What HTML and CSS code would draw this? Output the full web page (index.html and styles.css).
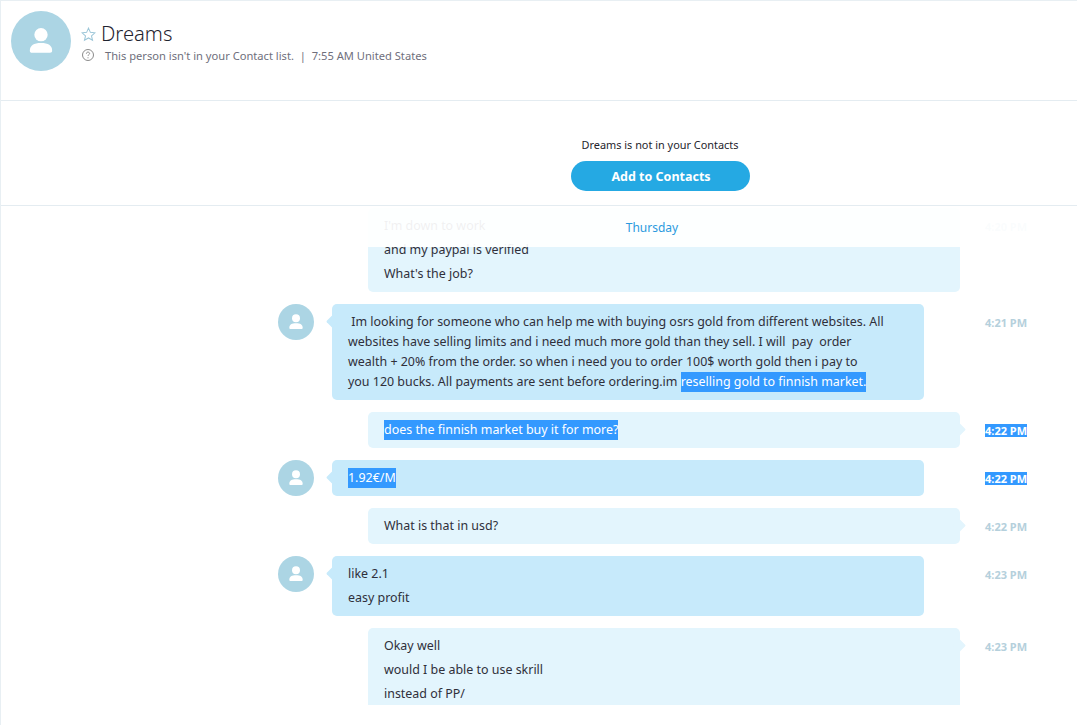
FILE: index.html
```html
<!DOCTYPE html>
<html lang="en">
<head>
<meta charset="utf-8">
<title>Dreams</title>
<link rel="stylesheet" href="styles.css">
</head>
<body>
<div class="app">
  <header class="header">
    <div class="avatar avatar-lg">
      <svg viewBox="0 0 36 36" class="person"><circle cx="18" cy="14.200" r="4"/><path d="M11.300 23.800c0-3.200 2.400-4.600 6.700-4.600s6.700 1.400 6.700 4.600c0 .8-.5 1.200-1.300 1.200H12.600c-.8 0-1.300-.4-1.300-1.200z"/></svg>
    </div>
    <div class="header-info">
      <div class="title-row">
        <svg class="star" viewBox="0 0 16 16"><path d="M8 1.200l2 4.500 4.900.5-3.700 3.200 1.100 4.800L8 11.700l-4.300 2.500 1.100-4.800L1.100 6.200 6 5.700z"/></svg>
        <h1 class="name">Dreams</h1>
      </div>
      <div class="status-row">
        <svg class="help" viewBox="0 0 14 14"><circle cx="7" cy="7" r="5.500"/><path d="M5.400 5.700c0-1 .7-1.600 1.600-1.600s1.600.6 1.600 1.400c0 1.200-1.600 1.200-1.600 2.400"/><path d="M7 9.300v1"/></svg>
        <span class="status-text">This person isn't in your Contact list.&nbsp; |&nbsp; 7:55 AM United States</span>
      </div>
    </div>
  </header>
  <section class="banner">
    <p class="banner-text">Dreams is not in your Contacts</p>
    <button class="add-btn">Add to Contacts</button>
  </section>
  <main class="chat">
    <div class="day-bar">Thursday</div>
    <div class="messages">
      <div class="row">
        <div class="bubble out">
          <p>I'm down to work</p>
          <p>and my paypal is verified</p>
          <p>What's the job?</p>
        </div>
        <time class="stamp">4:20 PM</time>
      </div>
      <div class="row">
        <div class="avatar avatar-sm"><svg viewBox="0 0 36 36" class="person"><circle cx="18" cy="14.200" r="4"/><path d="M11.300 23.800c0-3.200 2.400-4.600 6.700-4.600s6.700 1.400 6.700 4.600c0 .8-.5 1.200-1.300 1.200H12.600c-.8 0-1.300-.4-1.300-1.200z"/></svg></div>
        <div class="bubble in tail">
          <p>&nbsp;Im looking for someone who can help me with buying osrs gold from different websites. All<br>websites have selling limits and i need much more gold than they sell. I will &nbsp;pay &nbsp;order<br>wealth + 20% from the order. so when i need you to order 100$ worth gold then i pay to<br>you 120 bucks. All payments are sent before ordering.im <span class="sel">reselling gold to finnish market.</span></p>
        </div>
        <time class="stamp">4:21 PM</time>
      </div>
      <div class="row">
        <div class="bubble out tail">
          <p><span class="sel">does the finnish market buy it for more?</span></p>
        </div>
        <time class="stamp"><span class="sel">4:22 PM</span></time>
      </div>
      <div class="row">
        <div class="avatar avatar-sm"><svg viewBox="0 0 36 36" class="person"><circle cx="18" cy="14.200" r="4"/><path d="M11.300 23.800c0-3.200 2.400-4.600 6.700-4.600s6.700 1.400 6.700 4.600c0 .8-.5 1.200-1.300 1.200H12.600c-.8 0-1.300-.4-1.300-1.200z"/></svg></div>
        <div class="bubble in tail">
          <p><span class="sel">1.92€/M</span></p>
        </div>
        <time class="stamp"><span class="sel">4:22 PM</span></time>
      </div>
      <div class="row">
        <div class="bubble out tail">
          <p>What is that in usd?</p>
        </div>
        <time class="stamp">4:22 PM</time>
      </div>
      <div class="row">
        <div class="avatar avatar-sm"><svg viewBox="0 0 36 36" class="person"><circle cx="18" cy="14.200" r="4"/><path d="M11.300 23.800c0-3.200 2.400-4.600 6.700-4.600s6.700 1.400 6.700 4.600c0 .8-.5 1.200-1.300 1.200H12.600c-.8 0-1.300-.4-1.300-1.200z"/></svg></div>
        <div class="bubble in tail">
          <p>like 2.1</p>
          <p>easy profit</p>
        </div>
        <time class="stamp">4:23 PM</time>
      </div>
      <div class="row">
        <div class="bubble out tail">
          <p>Okay well</p>
          <p>would I be able to use skrill</p>
          <p>instead of PP/</p>
          <p>&nbsp;</p>
        </div>
        <time class="stamp">4:23 PM</time>
      </div>
    </div>
  </main>
</div>
</body>
</html>
```
FILE: styles.css
```css
* { box-sizing: border-box; }
html, body { margin: 0; padding: 0; background: #fff; }
body { font-family: "Noto Sans", "Open Sans", sans-serif; color: #2f2f3a; overflow: hidden; }
p, h1 { margin: 0; font-weight: normal; }
.app { width: 1077px; height: 725px; border-top: 1px solid #e8eff3; border-left: 1px solid #e8eff3; overflow: hidden; }

.header { height: 100px; border-bottom: 1px solid #e4ecf1; display: flex; align-items: flex-start; padding: 10px 0 0 10px; }
.avatar { border-radius: 50%; background: #acd5e4; flex: none; }
.avatar-lg { width: 60px; height: 60px; }
.avatar-sm { width: 36px; height: 36px; margin-right: 18px; }
.person { display: block; width: 100%; height: 100%; fill: #fff; }
.header-info { margin-left: 10px; }
.title-row { display: flex; align-items: center; height: 24px; margin-top: 10px; }
.star { width: 15px; height: 15px; margin-top: 3px; fill: none; stroke: #9cc6d8; stroke-width: 1.100; }
.name { font-size: 20.200px; font-weight: 300; line-height: 24px; margin-left: 5px; color: #1f2430; }
.status-row { display: flex; align-items: center; height: 18px; margin-top: 1px; }
.help { width: 14px; height: 14px; fill: none; stroke: #8b8b8b; stroke-width: 1; }
.status-text { font-size: 11.150px; color: #6f6f7c; margin-left: 10px; }

.banner { height: 105px; border-bottom: 1px solid #e4ecf1; display: flex; flex-direction: column; align-items: center; padding: 36px 0 0 242px; }
.banner-text { font-size: 10.900px; line-height: 16px; color: #24242c; }
.add-btn { width: 179px; height: 30px; margin-top: 8px; border: 0; border-radius: 15px; background: #25a9e3; color: #fff; font-family: inherit; font-size: 12.500px; font-weight: 700; padding: 0 0 0 2px; }

.chat { position: relative; height: 499px; overflow: hidden; }
.day-bar { position: absolute; left: 0; right: 0; top: 0; height: 41px; background: rgba(255,255,255,.93); color: #2b9ade; font-size: 12px; line-height: 43px; text-align: center; padding-left: 226px; z-index: 2; }
.messages { display: flex; flex-direction: column; gap: 12px; padding: 2px 0 0 277px; }
.row { display: flex; align-items: flex-start; }
.bubble { position: relative; width: 592px; padding: 8px 16px; border-radius: 5px; font-size: 12.440px; line-height: 20px; display: flex; flex-direction: column; gap: 4px; }
.bubble.in { background: #c7eafb; }
.bubble.out { background: #e3f5fd; margin-left: 90px; }
.tail::before { content: ""; position: absolute; top: 13px; width: 9px; height: 9px; transform: rotate(45deg); border-radius: 1px; }
.in.tail::before { left: -4px; background: #c7eafb; }
.out.tail::before { right: -4px; background: #e3f5fd; }
.sel { display: inline-block; background: #3399ff; color: #fff; }
.stamp { margin-left: auto; width: 92px; flex: none; font-size: 11px; font-weight: 700; line-height: 13px; margin-top: 12px; color: #b5d0dc; }
```
